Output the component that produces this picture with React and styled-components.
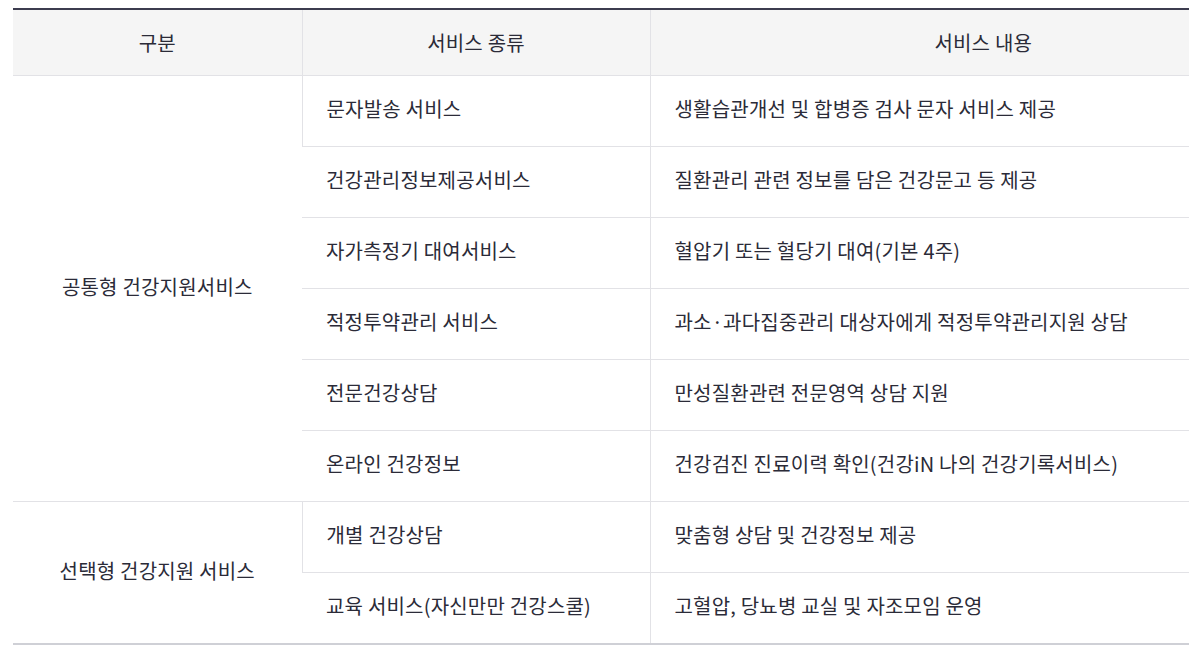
import React from "react";
import styled, { createGlobalStyle } from "styled-components";

const Global = createGlobalStyle`
  html, body { margin: 0; padding: 0; background: #fff; overflow: hidden; }
  body { font-family: "Noto Sans CJK KR", "Noto Sans", sans-serif; }
`;

const Wrap = styled.div`
  padding: 8px 0 0 13px;
  overflow: hidden;
`;

const Table = styled.table`
  width: 1303px;
  border-collapse: collapse;
  table-layout: fixed;
  border-top: 2px solid #3c3c4f;
  border-bottom: 2px solid #cfd0d6;
  font-size: 20px;
  letter-spacing: 0.2px;
  color: #2b2b38;
`;

const Th = styled.th`
  height: 65px;
  padding: 0;
  background: #f5f5f5;
  font-weight: 400;
  text-align: center;
  border-bottom: 1px solid #e2e2e6;
  border-left: 1px solid #e2e2e6;
  &:first-child { border-left: none; }
  line-height: 1;
  vertical-align: middle;
`;

const Td = styled.td`
  height: 66px;
  padding: 0 0 4px ${(p) => (p.$center ? 0 : 24)}px;
  text-align: ${(p) => (p.$center ? "center" : "left")};
  border-bottom: 1px solid #e2e2e6;
  border-left: 1px solid #e2e2e6;
  &:first-child { border-left: none; }
  vertical-align: middle;
  line-height: 1.2;
  white-space: nowrap;
`;

const groups = [
  {
    name: "공통형 건강지원서비스",
    rows: [
      ["문자발송 서비스", "생활습관개선 및 합병증 검사 문자 서비스 제공"],
      ["건강관리정보제공서비스", "질환관리 관련 정보를 담은 건강문고 등 제공"],
      ["자가측정기 대여서비스", "혈압기 또는 혈당기 대여(기본 4주)"],
      ["적정투약관리 서비스", "과소·과다집중관리 대상자에게 적정투약관리지원 상담"],
      ["전문건강상담", "만성질환관련 전문영역 상담 지원"],
      ["온라인 건강정보", "건강검진 진료이력 확인(건강iN 나의 건강기록서비스)"],
    ],
  },
  {
    name: "선택형 건강지원 서비스",
    rows: [
      ["개별 건강상담", "맞춤형 상담 및 건강정보 제공"],
      ["교육 서비스(자신만만 건강스쿨)", "고혈압, 당뇨병 교실 및 자조모임 운영"],
    ],
  },
];

export default function App() {
  return (
    <>
      <Global />
      <Wrap>
        <Table>
          <colgroup>
            <col style={{ width: 289 }} />
            <col style={{ width: 348 }} />
            <col />
          </colgroup>
          <thead>
            <tr>
              <Th>구분</Th>
              <Th>서비스 종류</Th>
              <Th>서비스 내용</Th>
            </tr>
          </thead>
          <tbody>
            {groups.map((g) =>
              g.rows.map((r, i) => (
                <tr key={g.name + i}>
                  {i === 0 && (
                    <Td $center rowSpan={g.rows.length}>
                      {g.name}
                    </Td>
                  )}
                  <Td>{r[0]}</Td>
                  <Td>{r[1]}</Td>
                </tr>
              ))
            )}
          </tbody>
        </Table>
      </Wrap>
    </>
  );
}
